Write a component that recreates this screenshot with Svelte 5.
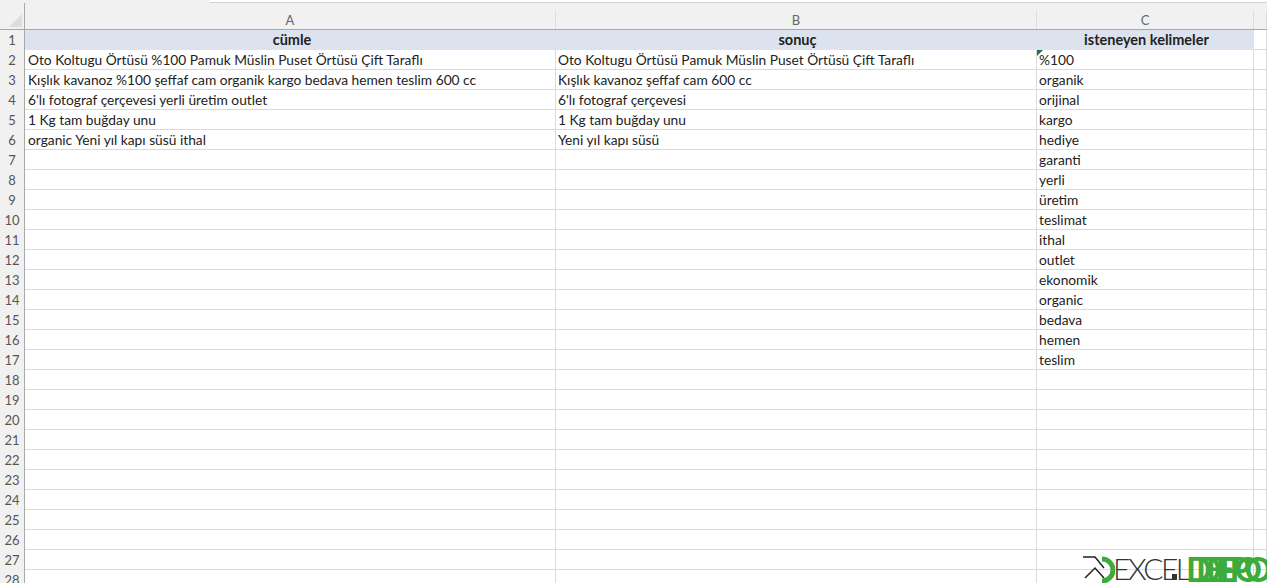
<script>
    const columns = [
        { key: 'a', label: 'A', title: 'cümle' },
        { key: 'b', label: 'B', title: 'sonuç' },
        { key: 'c', label: 'C', title: 'isteneyen kelimeler' }
    ];

    const colA = [
        'Oto Koltugu Örtüsü %100 Pamuk Müslin Puset Örtüsü Çift Taraflı',
        'Kışlık kavanoz %100 şeffaf cam organik kargo bedava hemen teslim 600 cc',
        "6'lı fotograf çerçevesi yerli üretim outlet",
        '1 Kg tam buğday unu',
        'organic Yeni yıl kapı süsü ithal'
    ];
    const colB = [
        'Oto Koltugu Örtüsü Pamuk Müslin Puset Örtüsü Çift Taraflı',
        'Kışlık kavanoz şeffaf cam 600 cc',
        "6'lı fotograf çerçevesi",
        '1 Kg tam buğday unu',
        'Yeni yıl kapı süsü'
    ];
    const colC = [
        '%100', 'organik', 'orijinal', 'kargo', 'hediye', 'garanti', 'yerli', 'üretim',
        'teslimat', 'ithal', 'outlet', 'ekonomik', 'organic', 'bedava', 'hemen', 'teslim'
    ];

    // rows 2..28
    const rows = Array.from({ length: 27 }, (_, i) => ({
        num: i + 2,
        a: colA[i] ?? '',
        b: colB[i] ?? '',
        c: colC[i] ?? ''
    }));
</script>

<div class="sheet">
    <div class="topbar"><div class="tab"></div></div>

    <div class="row colhead">
        <div class="corner"><span class="tri"></span></div>
        {#each columns as col}
            <div class="cell">{col.label}</div>
        {/each}
        <div class="cell"></div>
    </div>

    <div class="row data">
        <div class="num">1</div>
        {#each columns as col}
            <div class="cell title">{col.title}</div>
        {/each}
        <div class="cell"></div>
    </div>

    {#each rows as row}
        <div class="row data">
            <div class="num">{row.num}</div>
            <div class="cell">{row.a}</div>
            <div class="cell">{row.b}</div>
            <div class="cell" class:flag={row.num === 2}>{row.c}</div>
            <div class="cell"></div>
        </div>
    {/each}

    <div class="logo">
        <svg width="32" height="30" viewBox="0 0 32 30">
            <path d="M0 4 H12 L21 15" fill="none" stroke="#222" stroke-width="1.5"/>
            <path d="M2 25 L12 15 L21 25" fill="none" stroke="#222" stroke-width="1.5"/>
            <path d="M19 6 A10.5 10.5 0 0 1 19 28" fill="none" stroke="#3cab3c" stroke-width="5"/>
        </svg>
        <span class="excel">EXCEL</span>
        <span class="speck"></span>
        <span class="depo back">DEPO</span>
        <span class="depo front">DEPO</span>
    </div>
</div>

<style>
    :global(body) {
        margin: 0;
        background: #fff;
        overflow: hidden;
    }

    .sheet {
        position: relative;
        width: 1267px;
        height: 583px;
        overflow: hidden;
        font-family: Lato, "Liberation Sans", sans-serif;
        font-size: 13.75px;
        color: #222;
    }

    .topbar {
        height: 3px;
        background: #f1f1f1;
    }

    .tab {
        box-sizing: border-box;
        height: 3px;
        margin-left: 210px;
        background: #fff;
        border-bottom: 1px solid #d4d4d4;
    }

    .row {
        display: grid;
        grid-template-columns: 25px 531px 481px 217px 1fr;
    }

    .colhead {
        height: 26px;
        background: #f1f1f1;
        border-bottom: 1px solid #a8a8a8;
        color: #666;
        font-size: 13px;
    }

    .colhead .cell {
        border-right: 1px solid #dcdcdc;
        margin-top: 8px;
        line-height: 18px;
        text-align: center;
    }

    .corner {
        position: relative;
        border-right: 1px solid #a8a8a8;
    }

    .tri {
        position: absolute;
        right: 2px;
        bottom: 2px;
        border-style: solid;
        border-width: 0 0 13px 13px;
        border-color: transparent transparent #dcdcdc transparent;
    }

    .data {
        height: 20px;
    }

    .data .cell {
        box-sizing: border-box;
        padding-left: 3px;
        line-height: 20px;
        white-space: nowrap;
        overflow: hidden;
        border-right: 1px solid #dadada;
        border-bottom: 1px solid #dadada;
        position: relative;
    }

    .data .cell:nth-child(4),
    .data .cell:nth-child(3) {
        padding-left: 2px;
    }

    .num {
        background: #f1f1f1;
        border-right: 1px solid #a8a8a8;
        color: #555;
        font-size: 13px;
        line-height: 20px;
        text-align: center;
    }

    .data .title {
        background: #dce3ee;
        border-right: 0;
        border-bottom: 0;
        font-size: 14.5px;
        font-weight: 700;
        text-align: center;
    }

    .flag::before {
        content: '';
        position: absolute;
        left: 0;
        top: 0;
        border-style: solid;
        border-width: 6px 6px 0 0;
        border-color: #217346 transparent transparent transparent;
    }

    .logo {
        position: absolute;
        left: 1083px;
        top: 553px;
        width: 184px;
        height: 30px;
    }

    .logo svg {
        position: absolute;
        left: 0;
        top: 0;
    }

    .excel {
        position: absolute;
        left: 30px;
        top: 0;
        font-size: 30px;
        font-weight: 300;
        line-height: 30px;
        letter-spacing: -2.5px;
        color: #333;
    }

    .speck {
        position: absolute;
        left: 89px;
        top: 21px;
        width: 5px;
        height: 5px;
        background: #333;
    }

    .depo {
        position: absolute;
        top: 1px;
        font-size: 34px;
        font-weight: 700;
        line-height: 30px;
        letter-spacing: -6px;
        color: #3cab3c;
    }

    .back {
        left: 103px;
    }

    .front {
        left: 113px;
    }
</style>
